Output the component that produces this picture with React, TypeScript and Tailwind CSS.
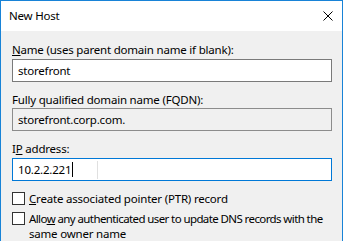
import { useState } from "react"

const font = { fontFamily: '"Noto Sans", "Liberation Sans", sans-serif' }

function Label({ children }: { children: React.ReactNode }) {
  return <div className="h-[15px] text-[11.5px] leading-[15px] tracking-[-0.2px] text-black">{children}</div>
}

function CheckRow({ children }: { children: React.ReactNode }) {
  const [on, setOn] = useState(false)
  return (
    <label className="flex items-start gap-[4px] text-[11.5px] leading-[15px] tracking-[-0.2px] text-black">
      <span
        onClick={() => setOn(!on)}
        className="mt-[1px] h-[13px] w-[13px] shrink-0 border border-[#333333] bg-white"
      />
      <span>{children}</span>
    </label>
  )
}

export default function App() {
  return (
    <div style={font} className="h-[241px] w-[343px] overflow-hidden border-x border-t border-[#1883d7] bg-[#f0f0f0]">
      <div className="flex h-[30px] items-center justify-between bg-white pl-[8px] pr-[9px]">
        <span className="text-[11.5px] tracking-[-0.2px] text-black">New Host</span>
        <svg width="10" height="10" viewBox="0 0 10 10">
          <path d="M0.5 0.5 L9.5 9.5 M9.5 0.5 L0.5 9.5" stroke="#000" strokeWidth="1" />
        </svg>
      </div>

      <div className="flex flex-col pl-[11px] pr-[10px] pt-[11px]">
        <Label>
          <u>N</u>ame (uses parent domain name if blank):
        </Label>
        <div className="mt-[2px] flex h-[23px] items-center border border-[#7a7a7a] bg-white px-[5px] text-[11.5px] tracking-[-0.2px]">
          storefront
        </div>

        <div className="mt-[10px]">
          <Label>Fully qualified domain name (FQDN):</Label>
        </div>
        <div className="mt-[1px] flex h-[23px] items-center border border-[#8c8c8c] bg-[#f0f0f0] px-[5px] text-[11.5px] tracking-[-0.2px]">
          storefront.corp.com.
        </div>

        <div className="mt-[10px]">
          <Label>
            I<u>P</u> address:
          </Label>
        </div>
        <div className="relative mt-[2px] flex h-[23px] items-center border border-[#0078d7] bg-white px-[5px] text-[11.5px] tracking-[-0.2px]">
          <span>10.2.2.221</span>
          <span className="ml-[1px] h-[15px] w-px bg-black" />
          <span className="absolute left-[84px] top-[2px] h-[18px] w-px bg-[#e0e0e0]" />
        </div>

        <div className="mt-[10px] flex flex-col gap-[5px]">
          <CheckRow>
            <u>C</u>reate associated pointer (PTR) record
          </CheckRow>
          <CheckRow>
            <span className="block whitespace-nowrap tracking-[-0.6px]">
              Allo<u>w</u> any authenticated user to update DNS records with the
            </span>
            <span className="block">same owner name</span>
          </CheckRow>
        </div>
      </div>
    </div>
  )
}
